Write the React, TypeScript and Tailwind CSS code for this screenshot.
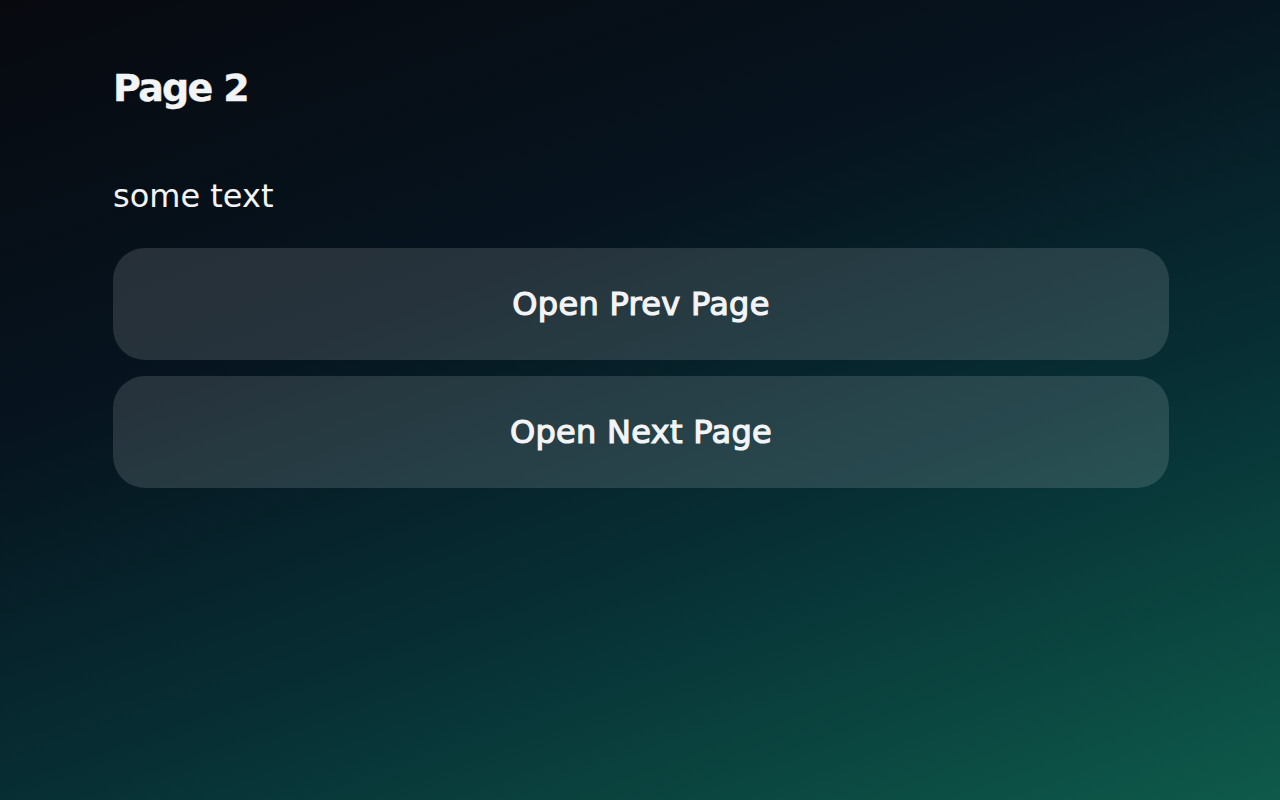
export default function App() {
  return (
    <div className="min-h-screen w-full bg-[linear-gradient(160deg,#07090f_0%,#06141f_35%,#073035_65%,#0e5a4a_100%)] font-['DejaVu_Sans',sans-serif] text-[#f3f4f6]">
      <div className="pl-[113px] pr-[111px] pt-[64px]">
        <h1 className="text-[38px] font-bold leading-[48px] tracking-[-1.7px] [-webkit-text-stroke:0.4px_#f3f4f6]">Page 2</h1>
        <p className="mt-[64px] text-[32px] leading-[40px]">some text</p>
        <div className="mt-[32px] flex flex-col gap-4">
          <button className="h-[112px] w-full rounded-[32px] bg-white/[0.13] text-[32px] font-normal tracking-[0.3px] text-[#f3f4f6] [-webkit-text-stroke:1.2px_#f3f4f6]">
            Open Prev Page
          </button>
          <button className="h-[112px] w-full rounded-[32px] bg-white/[0.13] text-[32px] font-normal tracking-[0.3px] text-[#f3f4f6] [-webkit-text-stroke:1.2px_#f3f4f6]">
            Open Next Page
          </button>
        </div>
      </div>
    </div>
  );
}
